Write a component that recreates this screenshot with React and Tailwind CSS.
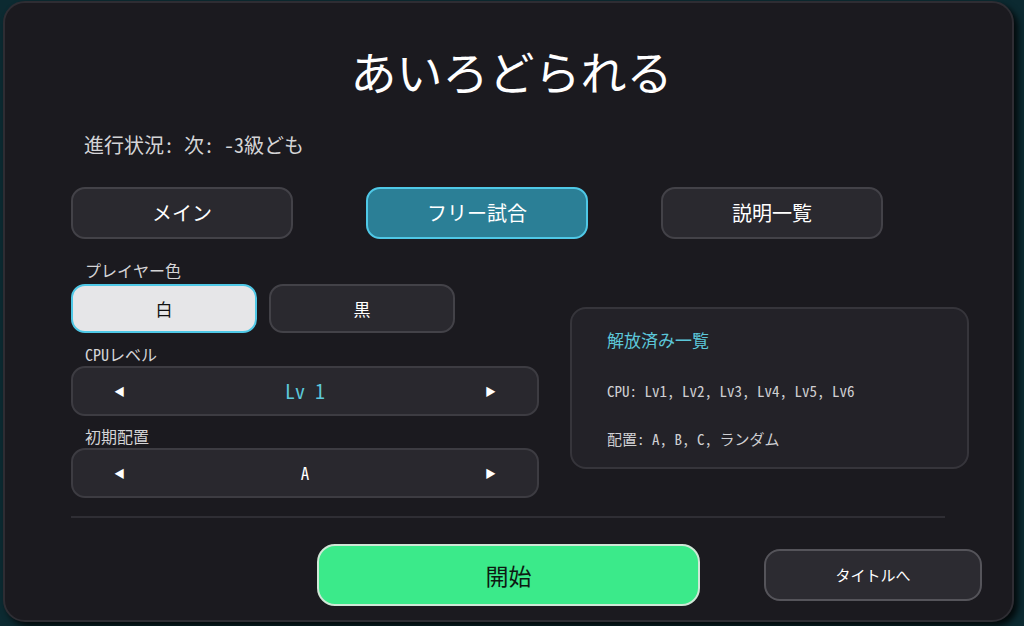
import React, { useState } from "react";

const mono = { fontFamily: '"Noto Sans Mono CJK JP", "Noto Sans CJK JP", monospace' };

const tabs = ["メイン", "フリー試合", "説明一覧"];

const Stepper = ({ value, accent }) => (
  <div className="flex h-[50px] w-[468px] items-center justify-between rounded-[14px] border-2 border-[#3d3c42] bg-[#29282e] px-[41px]">
    <span className="text-[11px] text-white">◀</span>
    <span className={accent ? "text-[20px] text-[#5cc7d9]" : "text-[17px] text-white"}>{value}</span>
    <span className="text-[11px] text-white">▶</span>
  </div>
);

export default function App() {
  const [tab, setTab] = useState(1);
  const [color, setColor] = useState(0);

  return (
    <div className="h-[626px] w-[1024px] bg-[#0c2a31] p-[1px] pl-[3px] pr-[10px]" style={mono}>
      <div className="flex h-[621px] flex-col rounded-[22px] border-2 border-[#2e2d33] bg-[#1b1a1f] pl-[66px] shadow-[4px_4px_6px_rgba(0,0,0,0.8)]">
        <h1 className="mt-[36px] h-[62px] pr-[60px] text-center text-[46px] leading-[62px] text-white">あいろどられる</h1>

        <div className="mt-[30px] pl-[13px] text-[20px] leading-[28px] text-[#d4d4d6]">進行状況: 次: -3級ども</div>

        <div className="mt-[28px] flex gap-[73px]">
          {tabs.map((t, i) => (
            <button
              key={t}
              onClick={() => setTab(i)}
              className={
                i === tab
                  ? "h-[52px] w-[222px] rounded-[14px] border-2 border-[#4fc8e6] bg-[#2b7f96] text-[20px] text-white"
                  : "h-[52px] w-[222px] rounded-[14px] border-2 border-[#434248] bg-[#2a292f] text-[20px] text-white"
              }
            >
              {t}
            </button>
          ))}
        </div>

        <div className="mt-[19px] flex">
          <div className="flex flex-col">
            <div className="pl-[14px] text-[16px] leading-[24px] text-[#d4d4d6]">プレイヤー色</div>
            <div className="mt-[2px] flex gap-[12px]">
              {["白", "黒"].map((c, i) => (
                <button
                  key={c}
                  onClick={() => setColor(i)}
                  className={
                    i === color
                      ? "h-[49px] w-[186px] rounded-[14px] border-2 border-[#4fc8e6] bg-[#e6e6e8] text-[17px] text-[#111]"
                      : "h-[49px] w-[186px] rounded-[14px] border-2 border-[#434248] bg-[#2a292f] text-[17px] text-white"
                  }
                >
                  {c}
                </button>
              ))}
            </div>

            <div className="mt-[9px] pl-[14px] text-[16px] leading-[24px] text-[#d4d4d6]">CPUレベル</div>
            <Stepper value="Lv 1" accent />

            <div className="mt-[8px] pl-[14px] text-[16px] leading-[24px] text-[#d4d4d6]">初期配置</div>
            <Stepper value="A" />
          </div>

          <div className="ml-[31px] mt-[49px] h-[162px] w-[399px] rounded-[16px] border-2 border-[#36353b] bg-[#232228] pl-[35px]">
            <div className="mt-[18px] text-[17px] leading-[26px] text-[#5cc7d9]">解放済み一覧</div>
            <div className="mt-[27px] text-[15px] leading-[22px] text-[#cfcfd2]">CPU: Lv1, Lv2, Lv3, Lv4, Lv5, Lv6</div>
            <div className="mt-[26px] text-[15px] leading-[22px] text-[#cfcfd2]">配置: A, B, C, ランダム</div>
          </div>
        </div>

        <div className="mt-[18px] h-[2px] w-[874px] bg-[#2f2e34]" />

        <div className="mt-[26px] flex items-center">
          <button className="ml-[246px] h-[62px] w-[383px] rounded-[18px] border-2 border-[#cfe7d6] bg-[#3bea8a] text-[23px] text-[#0d1a12]">
            開始
          </button>
          <button className="ml-[64px] h-[52px] w-[218px] rounded-[16px] border-2 border-[#55545a] bg-[#2c2b31] text-[15px] text-white">
            タイトルへ
          </button>
        </div>
      </div>
    </div>
  );
}
